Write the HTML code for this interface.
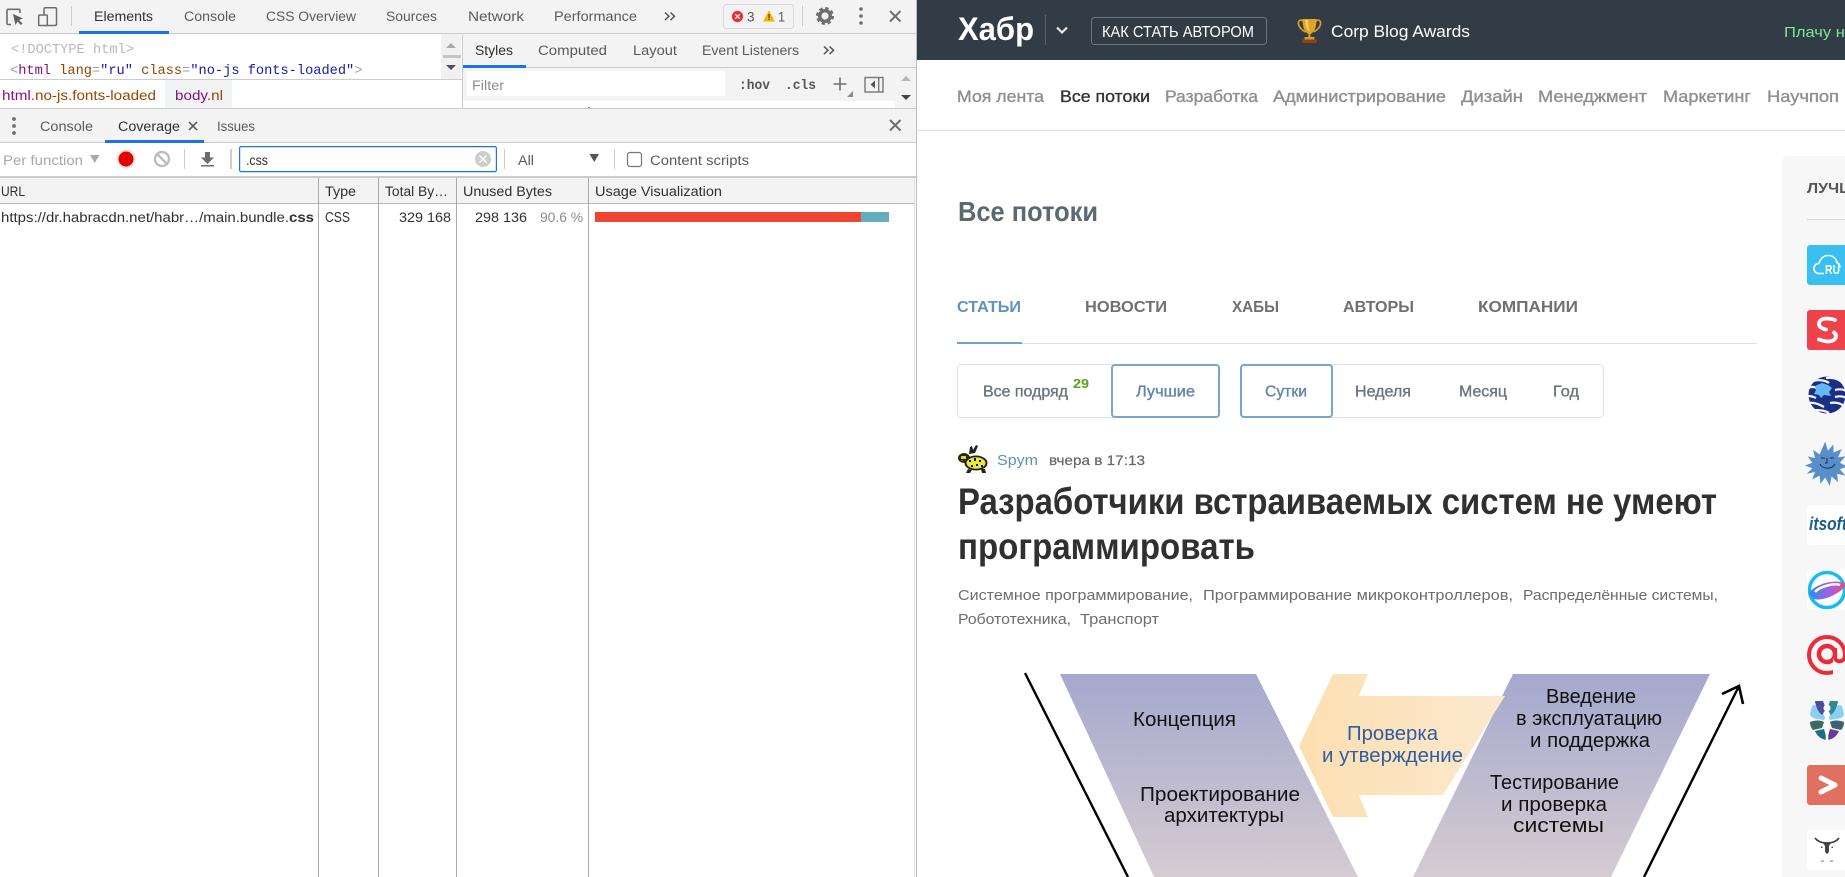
<!DOCTYPE html>
<html lang="ru">
<head>
<meta charset="utf-8">
<title>DevTools Coverage</title>
<style>
html,body{margin:0;padding:0;background:#fff;width:1845px;height:877px;overflow:hidden}
svg{display:block;position:absolute;left:0;top:0}
text{font-family:"Liberation Sans","DejaVu Sans",sans-serif;white-space:pre}
.u{font-size:13.5px;fill:#5a5a5a}
.d{fill:#303030}
.h{font-size:13.5px;fill:#303030}
.m{font-family:"Liberation Mono",monospace;font-size:13.67px}
.n{font-size:16.5px;fill:#8f8f8f;stroke:#8f8f8f;stroke-width:.35}
.t{font-size:16px;font-weight:700;fill:#707070}
.s{font-size:15.5px;fill:#6c747c;stroke:#6c747c;stroke-width:.35}
.g{font-size:14.5px;fill:#6d6d6d}
.k{font-size:20px;fill:#111}
.b{font-size:20.5px;fill:#2f5da5}
</style>
</head>
<body>
<svg width="1845" height="877" viewBox="0 0 1845 877" xmlns="http://www.w3.org/2000/svg">
<defs>
<linearGradient id="band" x1="0" y1="0" x2="0" y2="1"><stop offset="0" stop-color="#a5a8cd"/><stop offset="1" stop-color="#d5ccd2"/></linearGradient>
<linearGradient id="org" x1="0" y1="0" x2="1" y2="0"><stop offset="0" stop-color="#fddfb0"/><stop offset="1" stop-color="#fbe9cf"/></linearGradient>
<linearGradient id="gl" x1="0" y1="0" x2="1" y2="0"><stop offset="0" stop-color="#2f8df0"/><stop offset=".6" stop-color="#a45fe0"/><stop offset="1" stop-color="#f0487a"/></linearGradient>
</defs>

<!-- ===== DEVTOOLS ===== -->
<rect x="0" y="0" width="917" height="877" fill="#fff"/>
<rect x="0" y="0" width="916" height="33" fill="#f3f3f3"/>
<rect x="0" y="33" width="916" height="1" fill="#ccc"/>
<rect x="916" y="0" width="1" height="877" fill="#bdbdbd"/>

<!-- inspect icon -->
<path d="M20 13V10.5a1.2 1.2 0 0 0-1.2-1.2H8.2A1.2 1.2 0 0 0 7 10.5v12.800a1.200 1.200 0 0 0 1.200 1.200H11" fill="none" stroke="#6e6e6e" stroke-width="1.600"/>
<path d="M13 14l10 4.500-4 1.500 3.500 3.500-1.500 1.500-3.500-3.500-2 3.500z" fill="#5f5f5f"/>
<!-- device icon -->
<rect x="44" y="7.700" width="12.500" height="17.800" rx="1.200" fill="none" stroke="#6e6e6e" stroke-width="1.500"/>
<rect x="38.700" y="15" width="8.600" height="10.500" rx="1" fill="#f3f3f3" stroke="#6e6e6e" stroke-width="1.500"/>
<rect x="71" y="6" width="1" height="20" fill="#ccc"/>

<text class="u d" x="94" y="21" textLength="59" lengthAdjust="spacingAndGlyphs">Elements</text>
<rect x="79" y="31" width="90" height="3" fill="#1a73e8"/>
<text class="u" x="184" y="21" textLength="52" lengthAdjust="spacingAndGlyphs">Console</text>
<text class="u" x="266" y="21" textLength="90" lengthAdjust="spacingAndGlyphs">CSS Overview</text>
<text class="u" x="386" y="21" textLength="51" lengthAdjust="spacingAndGlyphs">Sources</text>
<text class="u" x="468" y="21" textLength="56" lengthAdjust="spacingAndGlyphs">Network</text>
<text class="u" x="554" y="21" textLength="83" lengthAdjust="spacingAndGlyphs">Performance</text>
<path d="M665 12.500l4 3.800-4 3.800M670.500 12.500l4 3.800-4 3.800" fill="none" stroke="#555" stroke-width="1.500"/>

<!-- error badge -->
<rect x="723.500" y="4.500" width="70" height="24" rx="3" fill="#f3f3f3" stroke="#d8d8d8"/>
<circle cx="737.500" cy="16.500" r="5.600" fill="#e8303a"/>
<path d="M735.300 14.300l4.400 4.400M739.700 14.300l-4.400 4.400" stroke="#fff" stroke-width="1.300"/>
<text class="u" x="747" y="21.500" textLength="7.500" lengthAdjust="spacingAndGlyphs">3</text>
<path d="M769 10.500l6 11h-12z" fill="#f4b400"/>
<rect x="768.300" y="14" width="1.400" height="4" fill="#6b5200"/><rect x="768.300" y="18.700" width="1.400" height="1.400" fill="#6b5200"/>
<text class="u" x="778" y="21.500" textLength="7" lengthAdjust="spacingAndGlyphs">1</text>
<rect x="802" y="6" width="1" height="20" fill="#ccc"/>
<!-- gear -->
<circle cx="825" cy="16" r="5.300" fill="none" stroke="#6e6e6e" stroke-width="3.400"/>
<circle cx="825" cy="16" r="7.800" fill="none" stroke="#6e6e6e" stroke-width="2.400" stroke-dasharray="3.400 2.730"/>
<circle cx="861" cy="9" r="1.800" fill="#6e6e6e"/><circle cx="861" cy="16" r="1.800" fill="#6e6e6e"/><circle cx="861" cy="23" r="1.800" fill="#6e6e6e"/>
<path d="M890 11l10.500 10.500M900.500 11L890 21.500" stroke="#6e6e6e" stroke-width="2"/>

<!-- elements panel -->
<text class="m" x="11" y="53" fill="#b9b9b9">&lt;!DOCTYPE html&gt;</text>
<text class="m" x="10" y="74" fill="#a0a0a0">&lt;<tspan fill="#881280">html</tspan> <tspan fill="#994500">lang</tspan>=<tspan fill="#1a1aa6">"ru"</tspan> <tspan fill="#994500">class</tspan>=<tspan fill="#1a1aa6">"no-js fonts-loaded"</tspan>&gt;</text>
<rect x="441" y="34" width="20" height="45" fill="#f1f1f1"/>
<path d="M451 43l5 5h-10z" fill="#a8a8a8"/>
<rect x="443" y="55" width="18" height="3" fill="#c4c4c4"/>
<path d="M446 65h10l-5 5z" fill="#505050"/>
<rect x="0" y="79" width="462" height="1" fill="#ccc"/>
<text class="u" x="2" y="100" textLength="154" lengthAdjust="spacingAndGlyphs"><tspan fill="#881280">html</tspan><tspan fill="#994500">.no-js.fonts-loaded</tspan></text>
<rect x="165" y="80" width="67" height="28" fill="#f1f3f4"/>
<text class="u" x="175" y="100" textLength="48" lengthAdjust="spacingAndGlyphs" style="fill:#881280">body<tspan fill="#994500">.nl</tspan></text>
<rect x="0" y="108" width="916" height="1" fill="#ccc"/>

<!-- styles panel -->
<rect x="462" y="34" width="1" height="74" fill="#ccc"/>
<rect x="463" y="34" width="453" height="33" fill="#f3f3f3"/>
<rect x="463" y="67" width="453" height="1" fill="#ccc"/>
<text class="u d" x="475" y="55" textLength="38" lengthAdjust="spacingAndGlyphs">Styles</text>
<rect x="463" y="65" width="63" height="3" fill="#1a73e8"/>
<text class="u" x="538" y="55" textLength="69" lengthAdjust="spacingAndGlyphs">Computed</text>
<text class="u" x="633" y="55" textLength="44" lengthAdjust="spacingAndGlyphs">Layout</text>
<text class="u" x="702" y="55" textLength="97" lengthAdjust="spacingAndGlyphs">Event Listeners</text>
<path d="M824 46.500l4 3.800-4 3.800M829.500 46.500l4 3.800-4 3.800" fill="none" stroke="#555" stroke-width="1.500"/>
<rect x="463" y="68" width="453" height="33" fill="#f3f3f3"/>
<rect x="467" y="71" width="258" height="25" fill="#fff"/>
<text class="u" x="472" y="90" textLength="32" lengthAdjust="spacingAndGlyphs" style="fill:#8d8d8d">Filter</text>
<text class="m" x="739" y="89" font-weight="700" font-size="13" fill="#555" textLength="31" lengthAdjust="spacingAndGlyphs">:hov</text>
<text class="m" x="785" y="89" font-weight="700" font-size="13" fill="#555" textLength="31" lengthAdjust="spacingAndGlyphs">.cls</text>
<path d="M840 77.500v13M833.500 84h13" stroke="#6e6e6e" stroke-width="1.600"/>
<path d="M853 91v6h-6z" fill="#8a8a8a"/>
<rect x="865" y="77.500" width="18" height="14.500" fill="none" stroke="#777" stroke-width="1.400"/>
<rect x="878" y="77.500" width="1.400" height="14.500" fill="#777"/>
<path d="M875 80.500v8l-4.500-4z" fill="#555"/>
<rect x="463" y="101" width="432" height="7" fill="#fff"/>
<rect x="895" y="68" width="21" height="40" fill="#f3f3f3"/>
<path d="M906 76l5 5h-10z" fill="#b5b5b5"/>
<path d="M901 95h10l-5 5z" fill="#444"/>
<rect x="588" y="107" width="2" height="1" fill="#888"/>

<!-- drawer tabs -->
<rect x="0" y="109" width="916" height="33" fill="#f3f3f3"/>
<rect x="0" y="142" width="916" height="1" fill="#ccc"/>
<circle cx="14" cy="119" r="1.900" fill="#6e6e6e"/><circle cx="14" cy="126" r="1.900" fill="#6e6e6e"/><circle cx="14" cy="133" r="1.900" fill="#6e6e6e"/>
<text class="u" x="40" y="131" textLength="53" lengthAdjust="spacingAndGlyphs">Console</text>
<text class="u d" x="118" y="131" textLength="62" lengthAdjust="spacingAndGlyphs">Coverage</text>
<path d="M189 122l8 8M197 122l-8 8" stroke="#555" stroke-width="1.500"/>
<text class="u" x="217" y="131" textLength="38" lengthAdjust="spacingAndGlyphs">Issues</text>
<rect x="105" y="140" width="99" height="3" fill="#1a73e8"/>
<path d="M890 120l10.500 10.500M900.500 120L890 130.500" stroke="#6e6e6e" stroke-width="2"/>

<!-- toolbar -->
<text class="u" x="3" y="165" textLength="80" lengthAdjust="spacingAndGlyphs" style="fill:#a9a9a9">Per function</text>
<path d="M90 155h9.500l-4.750 8z" fill="#a9a9a9"/>
<circle cx="126" cy="159" r="9.500" fill="#e00" opacity=".13"/>
<circle cx="126" cy="159" r="7.500" fill="#e00000"/>
<circle cx="162" cy="159" r="7" fill="none" stroke="#bcbcbc" stroke-width="2.400"/>
<path d="M157 154l10 10" stroke="#bcbcbc" stroke-width="2.400"/>
<rect x="184" y="149" width="1" height="20" fill="#ccc"/>
<path d="M205 152h5v5.500h4l-6.500 6.500-6.500-6.500h4z" fill="#6e6e6e"/>
<rect x="201" y="165" width="13" height="1.500" fill="#6e6e6e"/>
<rect x="230" y="149" width="2" height="20" fill="#ccc"/>
<rect x="239.600" y="146.600" width="256.800" height="25" rx="1.500" fill="#fff" stroke="#1a73e8" stroke-width="1.200"/>
<text class="u d" x="246" y="165" textLength="22" lengthAdjust="spacingAndGlyphs">.css</text>
<circle cx="483" cy="159" r="8" fill="#ccc"/>
<path d="M479.500 155.500l7 7M486.500 155.500l-7 7" stroke="#fff" stroke-width="1.500"/>
<rect x="504" y="149" width="1" height="20" fill="#ccc"/>
<text class="u" x="518" y="165" textLength="16" lengthAdjust="spacingAndGlyphs">All</text>
<path d="M589.500 154h9.500l-4.750 8z" fill="#555"/>
<rect x="614" y="149" width="1" height="20" fill="#ccc"/>
<rect x="627.500" y="152.500" width="14" height="14" rx="2.500" fill="#fff" stroke="#767676" stroke-width="1.200"/>
<text class="u" x="650" y="165" textLength="99" lengthAdjust="spacingAndGlyphs">Content scripts</text>

<!-- table -->
<rect x="0" y="176" width="916" height="2" fill="#ccc"/>
<rect x="0" y="178" width="914" height="25" fill="#f3f3f3"/>
<rect x="0" y="203" width="914" height="1" fill="#b9b9b9"/>
<rect x="318" y="178" width="1" height="699" fill="#aaa"/>
<rect x="378" y="178" width="1" height="699" fill="#aaa"/>
<rect x="456" y="178" width="1" height="699" fill="#aaa"/>
<rect x="588" y="178" width="1" height="699" fill="#aaa"/>
<rect x="914" y="178" width="1" height="699" fill="#ddd"/>
<text class="h" x="1" y="196" textLength="24" lengthAdjust="spacingAndGlyphs">URL</text>
<text class="h" x="325" y="196" textLength="31" lengthAdjust="spacingAndGlyphs">Type</text>
<text class="h" x="385" y="196" textLength="63" lengthAdjust="spacingAndGlyphs">Total By…</text>
<text class="h" x="463" y="196" textLength="89" lengthAdjust="spacingAndGlyphs">Unused Bytes</text>
<text class="h" x="595" y="196" textLength="127" lengthAdjust="spacingAndGlyphs">Usage Visualization</text>
<text class="h" x="1" y="222" textLength="313" lengthAdjust="spacingAndGlyphs">https://dr.habracdn.net/habr…/main.bundle.<tspan font-weight="700">css</tspan></text>
<text class="h" x="325" y="222" textLength="25" lengthAdjust="spacingAndGlyphs" font-size="14" style="font-size:14.500px">CSS</text>
<text class="h" x="399" y="222" textLength="52" lengthAdjust="spacingAndGlyphs">329 168</text>
<text class="h" x="475" y="222" textLength="52" lengthAdjust="spacingAndGlyphs">298 136</text>
<text class="h" x="540" y="222" textLength="43" lengthAdjust="spacingAndGlyphs" style="fill:#8c8c8c">90.6 %</text>
<rect x="595" y="212" width="266" height="10" fill="#f04530"/>
<rect x="861" y="212" width="28" height="10" fill="#64adbc"/>

<!-- ===== HABR PAGE ===== -->
<rect x="917" y="0" width="928" height="60" fill="#323c46"/>
<text x="958" y="40" font-size="32" font-weight="700" fill="#fff" textLength="76" lengthAdjust="spacingAndGlyphs">Хабр</text>
<rect x="1045" y="15" width="1" height="30" fill="#5b656f"/>
<path d="M1057 27.500l5 5 5-5" fill="none" stroke="#e8e8e8" stroke-width="2.200"/>
<rect x="1091.500" y="17.500" width="175" height="27" rx="3" fill="none" stroke="#6e7780"/>
<text x="1102" y="37" font-size="15.500" fill="#fff" textLength="152" lengthAdjust="spacingAndGlyphs">КАК СТАТЬ АВТОРОМ</text>
<!-- trophy -->
<path d="M1303 21c-3-2-5 0-4.500 3 .5 3.500 4 6.500 7 8M1316 21c3-2 5 0 4.500 3-.5 3.500-4 6.500-7 8" fill="none" stroke="#d59a22" stroke-width="1.700"/>
<path d="M1302.500 19h14c0 7-1.500 13-6 15v3h-2v-3c-4.500-2-6-8-6-15z" fill="#e0a526"/>
<path d="M1305 20h3c0 5 .5 8 2 12-3-2-4.500-6-5-12z" fill="#f5d060"/>
<rect x="1304.500" y="37" width="10" height="2.500" fill="#d49a2a"/>
<rect x="1302" y="39.500" width="15" height="3.500" fill="#8e3f10"/>
<text x="1331" y="37" font-size="17" fill="#fff" textLength="139" lengthAdjust="spacingAndGlyphs">Corp Blog Awards</text>
<text x="1784" y="37" font-size="15" fill="#7bea8e" textLength="70" lengthAdjust="spacingAndGlyphs">Плачу на</text>

<!-- nav -->
<rect x="917" y="130" width="928" height="1" fill="#dde3e5"/>
<text class="n" x="957" y="102" textLength="87" lengthAdjust="spacingAndGlyphs">Моя лента</text>
<text class="n" x="1060" y="102" textLength="90" lengthAdjust="spacingAndGlyphs" style="fill:#333;stroke:#333">Все потоки</text>
<text class="n" x="1165" y="102" textLength="93" lengthAdjust="spacingAndGlyphs">Разработка</text>
<text class="n" x="1273" y="102" textLength="173" lengthAdjust="spacingAndGlyphs">Администрирование</text>
<text class="n" x="1461" y="102" textLength="62" lengthAdjust="spacingAndGlyphs">Дизайн</text>
<text class="n" x="1538" y="102" textLength="109" lengthAdjust="spacingAndGlyphs">Менеджмент</text>
<text class="n" x="1663" y="102" textLength="88" lengthAdjust="spacingAndGlyphs">Маркетинг</text>
<text class="n" x="1767" y="102" textLength="72" lengthAdjust="spacingAndGlyphs">Научпоп</text>

<!-- heading -->
<text x="958" y="221" font-size="28" font-weight="700" fill="#5d6972" textLength="140" lengthAdjust="spacingAndGlyphs">Все потоки</text>

<!-- tabs -->
<text class="t" x="957" y="312" textLength="64" lengthAdjust="spacingAndGlyphs" style="fill:#5f93bd">СТАТЬИ</text>
<text class="t" x="1085" y="312" textLength="82" lengthAdjust="spacingAndGlyphs">НОВОСТИ</text>
<text class="t" x="1232" y="312" textLength="47" lengthAdjust="spacingAndGlyphs">ХАБЫ</text>
<text class="t" x="1343" y="312" textLength="71" lengthAdjust="spacingAndGlyphs">АВТОРЫ</text>
<text class="t" x="1478" y="312" textLength="100" lengthAdjust="spacingAndGlyphs">КОМПАНИИ</text>
<rect x="957" y="343" width="800" height="1" fill="#dde3e5"/>
<rect x="957" y="342" width="65" height="2" fill="#6fa3cd"/>

<!-- filters -->
<rect x="957.500" y="364.500" width="262" height="53" rx="4" fill="#fff" stroke="#dde3e5"/>
<rect x="1240.500" y="364.500" width="363" height="53" rx="4" fill="#fff" stroke="#dde3e5"/>
<text class="s" x="983" y="396.500" textLength="85" lengthAdjust="spacingAndGlyphs">Все подряд</text>
<text x="1073" y="388" font-size="13" font-weight="700" fill="#5f9e1c" textLength="16" lengthAdjust="spacingAndGlyphs">29</text>
<rect x="1112" y="365" width="107" height="52" rx="3" fill="#fff" stroke="#78a5cf" stroke-width="2"/>
<text class="s" x="1136" y="396.500" textLength="59" lengthAdjust="spacingAndGlyphs" style="fill:#5f85a8;stroke:#5f85a8">Лучшие</text>
<rect x="1241" y="365" width="91" height="52" rx="3" fill="#fff" stroke="#78a5cf" stroke-width="2"/>
<text class="s" x="1265" y="396.500" textLength="42" lengthAdjust="spacingAndGlyphs" style="fill:#5f85a8;stroke:#5f85a8">Сутки</text>
<text class="s" x="1355" y="396.500" textLength="56" lengthAdjust="spacingAndGlyphs">Неделя</text>
<text class="s" x="1459" y="396.500" textLength="48" lengthAdjust="spacingAndGlyphs">Месяц</text>
<text class="s" x="1553" y="396.500" textLength="26" lengthAdjust="spacingAndGlyphs">Год</text>

<!-- avatar -->
<g>
<path d="M969 454l1-7 2-1 1 4 3-5 2 1-3 7z" fill="#222"/>
<ellipse cx="964" cy="458" rx="6" ry="5" fill="#2a2a10"/>
<ellipse cx="976" cy="463" rx="11.500" ry="7.500" fill="#20200c"/>
<ellipse cx="976" cy="463" rx="9.500" ry="5.700" fill="#e9e93c"/>
<rect x="961" y="456" width="5" height="3" fill="#d8d83a"/>
<rect x="961" y="460" width="2" height="1" fill="#c33"/>
<g fill="#111"><rect x="969" y="460" width="2" height="2"/><rect x="974" y="458" width="2" height="3"/><rect x="979" y="460" width="2" height="2"/><rect x="971" y="465" width="2" height="2"/><rect x="976" y="464" width="2" height="2"/><rect x="981" y="465" width="2" height="2"/></g>
<path d="M968 469l-2 4h4l2-3zM981 469l1 4h4l-1-4z" fill="#222"/>
</g>
<text x="997" y="465" font-size="15" fill="#5f93ab" textLength="41" lengthAdjust="spacingAndGlyphs">Spym</text>
<text x="1049" y="465" font-size="14" fill="#666" stroke="#666" stroke-width=".2" textLength="96" lengthAdjust="spacingAndGlyphs">вчера в 17:13</text>

<!-- title -->
<text x="958" y="514" font-size="37" font-weight="700" fill="#303030" textLength="759" lengthAdjust="spacingAndGlyphs">Разработчики встраиваемых систем не умеют</text>
<text x="958" y="559" font-size="37" font-weight="700" fill="#303030" textLength="297" lengthAdjust="spacingAndGlyphs">программировать</text>

<!-- hubs -->
<text class="g" x="958" y="600" textLength="235" lengthAdjust="spacingAndGlyphs">Системное программирование,</text>
<text class="g" x="1203" y="600" textLength="310" lengthAdjust="spacingAndGlyphs">Программирование микроконтроллеров,</text>
<text class="g" x="1523" y="600" textLength="195" lengthAdjust="spacingAndGlyphs">Распределённые системы,</text>
<text class="g" x="958" y="624" textLength="113" lengthAdjust="spacingAndGlyphs">Робототехника,</text>
<text class="g" x="1080" y="624" textLength="79" lengthAdjust="spacingAndGlyphs">Транспорт</text>

<!-- V diagram -->
<path d="M1060 674H1256L1358 877H1154z" fill="url(#band)"/>
<path d="M1513 674H1710L1611 877H1413z" fill="url(#band)"/>
<path d="M1333 674h35l-9 22h146l-62 99h-84l9 22h-35l-34-71z" fill="url(#org)"/>
<path d="M1025 673L1128 877" stroke="#000" stroke-width="2.400" fill="none"/>
<path d="M1644 877L1739 686" stroke="#000" stroke-width="2.400" fill="none"/>
<path d="M1722 694l17-8 4 18" stroke="#000" stroke-width="2.600" fill="none"/>

<text class="k" x="1133" y="726" textLength="103" lengthAdjust="spacingAndGlyphs">Концепция</text>
<text class="k" x="1140" y="801" textLength="160" lengthAdjust="spacingAndGlyphs">Проектирование</text>
<text class="k" x="1164" y="822" textLength="120" lengthAdjust="spacingAndGlyphs">архитектуры</text>
<text class="k" x="1546" y="703" textLength="90" lengthAdjust="spacingAndGlyphs">Введение</text>
<text class="k" x="1516" y="725" textLength="146" lengthAdjust="spacingAndGlyphs">в эксплуатацию</text>
<text class="k" x="1530" y="747" textLength="120" lengthAdjust="spacingAndGlyphs">и поддержка</text>
<text class="k" x="1490" y="789" textLength="129" lengthAdjust="spacingAndGlyphs">Тестирование</text>
<text class="k" x="1501" y="811" textLength="106" lengthAdjust="spacingAndGlyphs">и проверка</text>
<text class="k" x="1513" y="832" textLength="91" lengthAdjust="spacingAndGlyphs">системы</text>
<text class="b" x="1347" y="740" textLength="91" lengthAdjust="spacingAndGlyphs">Проверка</text>
<text class="b" x="1322" y="762" textLength="141" lengthAdjust="spacingAndGlyphs">и утверждение</text>

<!-- ===== SIDEBAR ===== -->
<rect x="1782" y="156" width="80" height="730" rx="5" fill="#f7f7f7"/>
<text x="1807" y="193" font-size="14.500" font-weight="700" fill="#555" textLength="70" lengthAdjust="spacingAndGlyphs">ЛУЧШИЕ</text>
<rect x="1807" y="219" width="38" height="1" fill="#d8d8d8"/>

<!-- cloud ru -->
<rect x="1807" y="245" width="40" height="40" rx="3" fill="#38c1f0"/>
<path d="M1824 273.500h-5c-3 0-5-2-5-5s2-5 5-5c1-5 5-8 9-8 5 0 8 3 9 7 2 1 3 3 3 5" fill="none" stroke="#fff" stroke-width="1.600"/>
<text x="1825" y="274" font-size="12.500" font-weight="700" fill="#fff" textLength="15" lengthAdjust="spacingAndGlyphs">RU</text>

<!-- S -->
<rect x="1807" y="310" width="40" height="40" rx="3" fill="#ee434b"/>
<path d="M1835 320c-3-1-6-1.500-8-1.500-5 0-8 2-8 5.500 0 3 2.500 4.500 7 5.500" fill="none" stroke="#fff" stroke-width="3.800" stroke-linecap="round"/>
<path d="M1819 339.500c3 1 6 2 9 2 5 0 8-2.500 8-5.500 0-1.500-.5-2.500-2-3.500" fill="none" stroke="#fff" stroke-width="3.800" stroke-linecap="round"/>

<!-- neptune -->
<circle cx="1827" cy="395" r="18.500" fill="#1a2f85"/>
<path d="M1811 382c6-3 14-2 18 1M1808 388c5-2 8-1 9 1M1808 396c3 0 6 1 8 2M1808 403c6-1 11 1 16 4M1812 410c6 0 12 0 17 3M1826 378c6-1 13 1 17 5M1835 390c4-1 8-1 11 1M1835 397c4-1 8-1 11 1M1830 403c5-1 10 0 14 3" fill="none" stroke="#f7f7f7" stroke-width="2.200"/>
<path d="M1815 386l7-3 6 2 4 3-3 4 2 4-7-1-3 3-2-3-5-1 2-4z" fill="#66b8f5"/>

<!-- spiky -->
<g transform="translate(1827 460) scale(.92) translate(-1827 -460)">
<path d="M1825 440l3 10 6-7 0 9 9-4-4 9 8-1-6 7 8 4-8 3 6 7-9-2 1 9-7-6-2 10-5-9-5 7-1-9-8 4 3-8-9 2 6-6-8-3 8-3-5-7 8 2-2-9 7 5z" fill="#588fca"/>
</g>
<path d="M1821 458h4M1830 458h4M1820 464c2 5 12 6 15 0M1827 458v5h-2" fill="none" stroke="#1e2e45" stroke-width="1"/>

<!-- itsoft -->
<rect x="1807" y="505" width="40" height="40" rx="3" fill="#fff"/>
<text x="1809" y="530" font-size="18" font-weight="700" font-style="italic" fill="#1e5a8e" textLength="38" lengthAdjust="spacingAndGlyphs">itsoft</text>

<!-- globe -->
<rect x="1807" y="570" width="40" height="40" rx="3" fill="#fff"/>
<circle cx="1827" cy="590" r="17.500" fill="none" stroke="#18bdf0" stroke-width="3.500"/>
<path d="M1809 594c4-10 28-16 36-10 2 6-24 20-33 14z" fill="url(#gl)"/>
<path d="M1815 592c5-6 20-9 25-7" fill="none" stroke="#fff" stroke-width="2.500"/>

<!-- @ -->
<circle cx="1827" cy="655" r="18" fill="none" stroke="#ed2b38" stroke-width="4"/>
<circle cx="1827" cy="654" r="8" fill="none" stroke="#ed2b38" stroke-width="4.500"/>
<rect x="1833" y="656" width="13" height="21" fill="#f7f7f7"/>
<path d="M1835 648v9c0 6 10 6 10-2" fill="none" stroke="#ed2b38" stroke-width="4"/>

<!-- insect -->
<path d="M1812 706c5-3 10 2 13 12l-1 2c-6-1-13-1-14-6z" fill="#8bd0f3"/>
<path d="M1842 706c-5-3-10 2-13 12l1 2c6-1 13-1 14-6z" fill="#8bd0f3"/>
<path d="M1815 701h8l3 8-4 6c-4-3-6-8-7-14z" fill="#4d4d9c"/>
<path d="M1838 701h-8l-3 8 4 6c4-3 6-8 7-14z" fill="#2f8a90"/>
<path d="M1810 722c5-2 11-2 14 0l-2 6-9 2c-2-2-3-5-3-8z" fill="#396b5f"/>
<path d="M1844 722c-5-2-11-2-14 0l2 6 9 2c2-2 3-5 3-8z" fill="#3a6570"/>
<path d="M1815 731l9-2 2 7 0 4c-5-1-9-4-11-9z" fill="#1f6b8a"/>
<path d="M1839 731l-9-2-2 7 0 4c5-1 9-4 11-9z" fill="#6b3a96"/>
<path d="M1827 704v36" stroke="#fff" stroke-width="2.500"/>
<circle cx="1827" cy="708" r="3.500" fill="#fff"/>

<!-- chevron -->
<rect x="1807" y="765" width="40" height="40" rx="3" fill="#e0705f"/>
<path d="M1821 778l14 7-14 7" fill="none" stroke="#fff" stroke-width="5" stroke-linecap="round" stroke-linejoin="round"/>

<!-- ox -->
<rect x="1807" y="830" width="40" height="40" rx="3" fill="#fff"/>
<path d="M1815 838c3 4 8 5 12 5s9-1 12-5" fill="none" stroke="#444" stroke-width="1.800"/>
<path d="M1823 843h8l-2 3v6l-2 2-2-2v-6z" fill="#444"/>
<rect x="1821" y="846.500" width="1.500" height="1.500" fill="#555"/><rect x="1831.500" y="846.500" width="1.500" height="1.500" fill="#555"/>
<rect x="1821" y="860.500" width="3" height="1.200" fill="#888"/><rect x="1830" y="860.500" width="3" height="1.200" fill="#888"/>
</svg>
</body>
</html>
